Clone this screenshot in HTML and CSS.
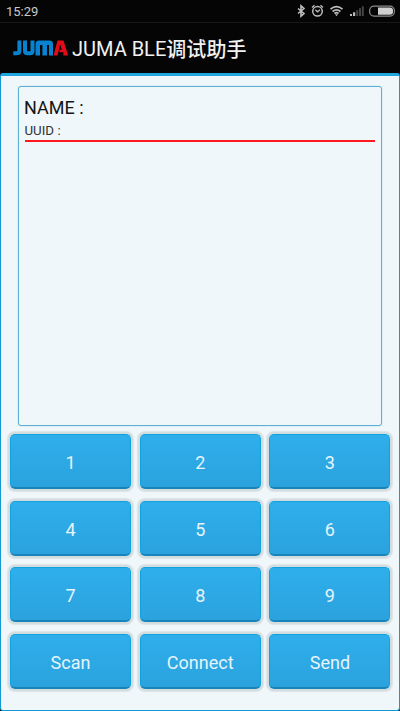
FILE: index.html
```html
<!DOCTYPE html>
<html lang="zh-CN">
<head>
<meta charset="utf-8">
<title>JUMA BLE调试助手</title>
<link rel="stylesheet" href="styles.css">
</head>
<body>
<div class="status">
  <span class="time">15:29</span>
  <svg class="status-icons" width="102" height="22" viewBox="294 0 102 22" fill="none" stroke="#bdbdbd">
    <path d="M298 8.500l6 5-3 2.700V5.800l3 2.700-6 5" stroke-width="1.600"/>
    <circle cx="317.500" cy="11.300" r="4.800" stroke-width="1.500"/>
    <path d="M315.300 9.800l2.200 2 2.500-2M312 7.500l2.500-2.300M323 7.500l-2.500-2.300" stroke-width="1.300"/>
    <path d="M330.500 9.200q6-5.200 12 0M332.600 11.500q3.900-3.400 7.800 0M334.500 13.500q2-1.600 4 0" stroke-width="1.700"/>
    <path d="M335 14.200h3l-1.500 2z" fill="#bdbdbd" stroke="none"/>
    <path d="M350 14h2v2h-2zM353 12.300h2.200V16H353z" fill="#bdbdbd" stroke="none"/>
    <path d="M356.200 10.300h2V16h-2zM359 8.300h2V16h-2zM361.800 6.300h2V16h-2z" fill="#444" stroke="none"/>
    <rect x="369.600" y="6.100" width="24.800" height="10" rx="4.500" stroke="#8c8c8c" stroke-width="1.200"/>
    <path d="M378 7.500h12a3 3 0 0 1 3 3v1.200a3 3 0 0 1-3 3h-12z" fill="#d0d0d0" stroke="none"/>
  </svg>
</div>
<header class="header">
  <svg class="logo" width="56" height="18" viewBox="0 0 56 18" fill="none" stroke="#0783d2" stroke-width="4">
    <path d="M.3 14.300H3.500q2.900 0 2.900-2.900V1.500M12 1.500v9.900q0 2.900 2.700 2.900h2.600q2.200 0 2.200-2.200V1.500"/>
    <path d="M22.500 16.500V5q0-3.500 3.500-3.500h10.500q3.500 0 3.500 3.500v11.500h-4V6h-2v10.500h-4.600V6h-2.400v10.500z" fill="#0783d2" stroke="none"/>
    <path d="M44.500 1.500h6L55.200 16.500H50.400v-3.200h-4v-2.600h2.500L47.200 5.500 44.500 16.500H40.500z" fill="#e20b18" stroke="none"/>
  </svg>
  <h1 class="title">JUMA BLE<span class="title-cjk">调试助手</span></h1>
</header>
<main class="panel">
  <section class="device">
    <div class="name">NAME :</div>
    <div class="uuid">UUID :</div>
  </section>
  <div class="keys">
    <button>1</button><button>2</button><button>3</button>
    <button>4</button><button>5</button><button>6</button>
    <button>7</button><button>8</button><button>9</button>
    <button>Scan</button><button>Connect</button><button>Send</button>
  </div>
</main>
</body>
</html>
```
FILE: styles.css
```css
* { box-sizing: border-box; }
body {
  margin: 0;
  width: 400px;
  height: 711px;
  display: flex;
  flex-direction: column;
  overflow: hidden;
  background: #050505;
  font-family: Roboto, "Noto Sans CJK SC", sans-serif;
}
.status {
  height: 23px;
  display: flex;
  justify-content: space-between;
  padding: 0 4px 0 6px;
  border-bottom: 1px solid #181818;
}
.time {
  color: #c8c8c8;
  font-size: 13px;
  line-height: 23px;
}
.header {
  height: 50px;
  display: flex;
  align-items: center;
  padding-left: 13px;
}
.logo { flex: none; }
.title {
  margin: 2px 0 0 3px;
  color: #f1f1f1;
  font-size: 20px;
  font-weight: 400;
  line-height: 26px;
  white-space: nowrap;
}
.title-cjk {
  position: relative;
  top: 1px;
  font-weight: 500;
  letter-spacing: .1px;
}
.panel {
  flex: 1;
  border: 1.5px solid #1499d2;
  border-top: 3px solid #20a7df;
  border-radius: 3px;
  background: #eff7fa;
  padding: 10px 8px 0;
}
.device {
  height: 340px;
  margin: 0 9px;
  border: 1px solid #5dafd4;
  box-shadow: 0 0 1px #5dafd4;
  border-radius: 3px;
  padding: 10px 6px 0;
}
.name {
  margin-left: -1px;
  color: #151515;
  font-size: 18px;
  line-height: 22px;
}
.uuid {
  height: 23px;
  border-bottom: 2px solid #ff1a1f;
  color: #333;
  font-size: 13.300px;
  line-height: 23px;
  text-indent: -.5px;
}
.keys {
  display: grid;
  grid-template-columns: repeat(3, 121px);
  grid-auto-rows: 55px;
  gap: 11.7px 8.7px;
  padding: 8px 0 0 1px;
}
button {
  border: 1px solid #10a1df;
  border-bottom: 2px solid #1686ba;
  border-radius: 5px;
  background: linear-gradient(#2eafec, #2ba2dd);
  box-shadow: 0 0 0 2px #d3dcdf, 0 0 1px 3px #dce4e7;
  padding: 3px 0 0;
  color: #e6f4fc;
  font: 18px Roboto, sans-serif;
}
```
